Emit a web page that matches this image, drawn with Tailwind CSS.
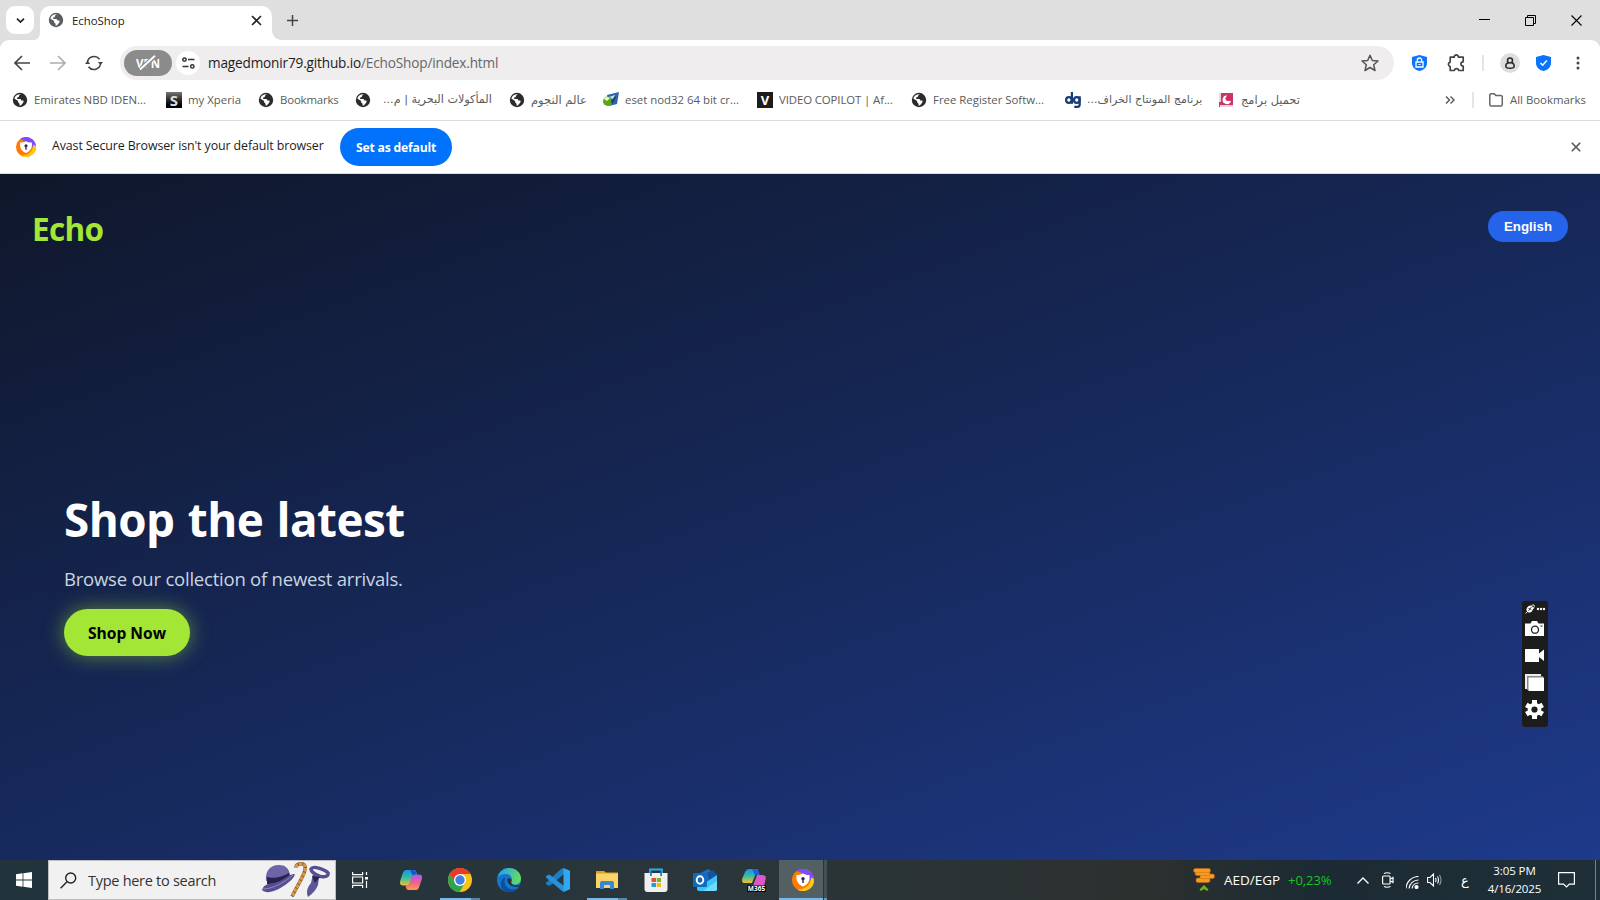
<!DOCTYPE html>
<html lang="en">
<head>
<meta charset="utf-8">
<title>EchoShop</title>
<script src="https://cdn.jsdelivr.net/npm/@tailwindcss/browser@4"></script>
</head>
<body class="w-[1600px] h-[900px] overflow-hidden flex flex-col font-['Open_Sans','Noto_Sans',sans-serif] text-[11.4px] text-[#222] bg-white">
<svg class="hidden">
  <symbol id="globe" viewBox="0 0 16 16"><circle cx="8" cy="8" r="7.200" fill="currentColor"/><path d="M9.200 2.300c-1 .4-2.200 1-2.200 2 0 .8-.7 1-1.400 1.200C4.600 5.800 4.800 7 5.800 7h2.400c.9 0 1 .9 1 1.500h1.300c1 0 1.400.7 1 1.400l-1 1.600c-.7 1.200-1.700 2-2.900 2.200v-1.800c0-.9-1.500-.8-1.500-1.900V9L2.300 6.600A5.900 5.900 0 0 1 9.200 2.300z" fill="#fff"/></symbol>
  <symbol id="avast" viewBox="0 0 24 24"><circle cx="12" cy="12" r="12" fill="#ff7a00"/><path d="M5 2.300A12 12 0 0 1 24 12c0 2-.5 3-1 4.500C20 9 13 5 5 2.300z" fill="#7b4dff"/><path d="M24 11A12 12 0 0 1 6 22.400C14 22 20 19 21 9z" fill="#ffc91a"/><path d="M12 5c2.400 1.300 4.800 1.600 7 1.600 1 6.500-2 10.500-7 12.700-5-2.200-8-6.200-7-12.700 2.200 0 4.600-.3 7-1.600z" fill="#fff"/><circle cx="12" cy="10.500" r="1.900" fill="#2c2f55"/><path d="M11.200 11h1.600v4.200h-1.600z" fill="#2c2f55"/></symbol>
</svg>

<!-- Tab strip -->
<header class="h-10 bg-[#dfdfdf] flex shrink-0">
  <div class="ml-1.5 mt-1.5 size-7 rounded-[9px] bg-white flex items-center justify-center">
    <svg class="size-[9px]" viewBox="0 0 9 9" fill="none" stroke="#222" stroke-width="1.700"><path d="M1 2.600l3.500 3.400L8 2.600"/></svg>
  </div>
  <svg class="w-1.5 h-[34px] mt-1.5" viewBox="0 0 6 34"><path d="M6 26c0 4-2 8-6 8h6z" fill="#fff"/></svg>
  <div class="mt-1.5 w-[232px] h-[34px] rounded-t-[10px] bg-white flex items-center pl-2 pr-2.5 pb-[6px]">
    <svg class="size-4 text-[#5a5e63]"><use href="#globe"/></svg>
    <span class="ml-2 pt-0.5 whitespace-nowrap">EchoShop</span>
    <svg class="ml-auto size-[11px]" viewBox="0 0 11 11" stroke="#222" stroke-width="1.600"><path d="M1 1l9 9M10 1l-9 9"/></svg>
  </div>
  <svg class="w-2.5 h-[34px] mt-1.5" viewBox="0 0 10 34"><path d="M0 24c0 6 4 10 10 10H0z" fill="#fff"/></svg>
  <svg class="ml-[5px] mt-[15px] size-[11px]" viewBox="0 0 11 11" stroke="#444" stroke-width="1.500"><path d="M5.500 0v11M0 5.500h11"/></svg>
  <div class="ml-auto flex items-center mr-[18px] gap-[35px]">
    <svg class="size-[11px]" viewBox="0 0 11 11" stroke="#000"><path d="M0 4.500h11"/></svg>
    <svg class="size-[11px]" viewBox="0 0 11 11" fill="none" stroke="#000"><path d="M.5 2.500h8v8h-8zM2.500 2.500v-2h8v8h-2"/></svg>
    <svg class="size-[11px]" viewBox="0 0 11 11" stroke="#000" stroke-width="1.100"><path d="M.5.500l10 10M10.500.500l-10 10"/></svg>
  </div>
</header>

<!-- Toolbar -->
<div class="bg-[#dfdfdf] shrink-0">
<div class="h-[46px] rounded-t-[9px] bg-white flex items-center">
  <svg class="ml-3.5 size-4" viewBox="0 0 16 16" fill="none" stroke="#444" stroke-width="1.600"><path d="M16 8H1.200M8 1L1 8l7 7"/></svg>
  <svg class="ml-5 size-4" viewBox="0 0 16 16" fill="none" stroke="#adadad" stroke-width="1.600"><path d="M0 8h14.800M8 1l7 7-7 7"/></svg>
  <svg class="ml-[19px] size-[18px]" viewBox="0 0 18 18" fill="none" stroke="#444" stroke-width="1.600"><path d="M2.400 9A6.700 6.700 0 0 1 14.500 5.300M15.600 9A6.700 6.700 0 0 1 3.500 12.700"/><path d="M12.800 8h5.200l-2.500 3zM0 10h5.200L2.500 7z" fill="#444" stroke="none"/></svg>
  <div class="ml-[17px] w-[1274px] h-[34px] rounded-full bg-[#efeded] flex items-center">
    <div class="ml-1 w-12 h-[26px] rounded-full bg-[#8b8b8b] flex items-center justify-center text-white">
      <svg class="w-6 h-4 overflow-visible" viewBox="0 0 24 16"><text x="0" y="12.500" font-size="12" font-weight="700" fill="#fff" textLength="24" lengthAdjust="spacingAndGlyphs">VPN</text><path d="M5 14L19 1" stroke="#8b8b8b" stroke-width="4.500"/><path d="M4 14.500L19 .8" stroke="#fff" stroke-width="1.900"/></svg>
    </div>
    <div class="ml-1 size-6 rounded-full bg-white flex items-center justify-center">
      <svg class="w-[13px] h-3" viewBox="0 0 13 12" fill="none" stroke="#333" stroke-width="1.500"><circle cx="2.500" cy="2.600" r="1.700"/><path d="M6 2.600h6.500M.5 9.400h6"/><circle cx="10.300" cy="9.400" r="1.700"/></svg>
    </div>
    <div class="ml-2 pt-px text-[13.600px] tracking-[-0.160px] whitespace-nowrap text-[#666]"><span class="text-[#1c1c1c]">magedmonir79.github.io</span>/EchoShop/index.html</div>
    <svg class="ml-auto mr-[15px] size-[18px]" viewBox="0 0 18 18" fill="none" stroke="#555" stroke-width="1.500" stroke-linejoin="round"><path d="M9 1.200l2.300 5.300 5.700.5-4.300 3.800 1.300 5.700L9 13.500l-5 3 1.300-5.700L1 7l5.700-.5z"/></svg>
  </div>
  <svg class="ml-[18px] w-[15px] h-4" viewBox="0 0 15 16"><path d="M7.500 0L15 2v6c0 4-3 7-7.500 8C3 15 0 12 0 8V2z" fill="#0a74ff"/><path d="M4 7h7v5H4zM5.300 7V5.200a2.200 2.200 0 0 1 4.400 0V7" fill="none" stroke="#fff" stroke-width="1.300"/><path d="M6.500 9.500h2" stroke="#fff"/></svg>
  <svg class="ml-5 size-[18px]" viewBox="0 0 18 18" fill="none" stroke="#444" stroke-width="1.700" stroke-linejoin="round"><path d="M2.200 3.500h4c-.4-3 4.600-3 4.200 0h4.800v4.600c-3 .2-3 4 0 4.200v4.500h-4.500c-.3-2.600-4-2.600-4.300 0H2.200v-4c-2.400-.6-2.400-3.800 0-4.400z" transform="translate(1 -.3)"/></svg>
  <div class="ml-[17px] w-0.5 h-4 bg-[#e5e5e5]"></div>
  <div class="ml-4 size-5 rounded-full bg-[#dedede] flex items-center justify-center"><svg class="w-[10px] h-3" viewBox="0 0 10 12" fill="none" stroke="#2a2a2a" stroke-width="1.500"><circle cx="5" cy="3.400" r="2.500"/><path d="M3.300 5.500C1.500 6.300.8 7.500.8 9.200.8 10.500 2 11.200 5 11.200s4.200-.7 4.200-2c0-1.700-.7-2.900-2.500-3.700"/></svg></div>
  <svg class="ml-4 w-[15px] h-4" viewBox="0 0 15 16"><path d="M7.500 0L15 2v6c0 4-3 7-7.500 8C3 15 0 12 0 8V2z" fill="#0a74ff"/><path d="M4.400 8l2.300 2.200 4.100-4.600" fill="none" stroke="#fff" stroke-width="1.500"/></svg>
  <svg class="ml-[25px] w-1 h-[14px]" viewBox="0 0 4 14" fill="#444"><circle cx="2" cy="2" r="1.500"/><circle cx="2" cy="7" r="1.500"/><circle cx="2" cy="12" r="1.500"/></svg>
</div>
</div>

<!-- Bookmarks bar -->
<nav class="h-[35px] shrink-0 border-b border-[#dcdcdc] flex items-center pb-[6px] pl-3 text-[#5a5a5a] whitespace-nowrap">
  <div class="w-[154px] flex items-center gap-1.5"><svg class="size-4 text-[#2b2b2b]"><use href="#globe"/></svg><span>Emirates NBD IDEN...</span></div>
  <div class="w-[92px] flex items-center gap-1.5"><div class="size-4 bg-gradient-to-b from-[#777] to-black text-[#ddd] font-bold text-[15px] leading-4 text-center">S</div><span>my Xperia</span></div>
  <div class="w-[97px] flex items-center gap-1.5"><svg class="size-4 text-[#2b2b2b]"><use href="#globe"/></svg><span class="tracking-[-0.150px]">Bookmarks</span></div>
  <div class="w-[154px] flex items-center gap-3"><svg class="size-4 text-[#2b2b2b]"><use href="#globe"/></svg><span dir="rtl" class="pt-px font-['DejaVu_Sans'] text-[11.200px]">المأكولات البحرية | م...</span></div>
  <div class="w-[94px] flex items-center gap-1.5"><svg class="size-4 text-[#2b2b2b]"><use href="#globe"/></svg><span dir="rtl" class="pt-px font-['DejaVu_Sans'] text-[11.500px]">عالم النجوم</span></div>
  <div class="w-[154px] flex items-center gap-1.5"><svg class="size-4" viewBox="0 0 16 16"><path d="M4 3l12-3-2 12-8 2z" fill="#2b66a8"/><path d="M6 5l6-2-1 5z" fill="#bfe0f5"/><circle cx="4.700" cy="9.300" r="4.700" fill="#58a618"/><path d="M1 7c2-3 4-2 6-1l-3 3z" fill="#e8f3e0"/><path d="M8 9l4-5 1 1-4 7z" fill="#143a70"/></svg><span>eset nod32 64 bit cr...</span></div>
  <div class="w-[154px] flex items-center gap-1.5"><div class="size-4 bg-[#1c1c1c] text-white font-bold text-[13px] leading-4 text-center">V</div><span class="tracking-[-0.100px]">VIDEO COPILOT | Af...</span></div>
  <div class="w-[154px] flex items-center gap-1.5"><svg class="size-4 text-[#2b2b2b]"><use href="#globe"/></svg><span>Free Register Softw...</span></div>
  <div class="w-[154px] flex items-center gap-1.5"><svg class="size-4" viewBox="0 0 16 16" fill="none" stroke="#173a78" stroke-width="2.200"><circle cx="3.900" cy="8" r="2.800"/><path d="M6.900 0v11.800M14.700 4.200v8.300q0 2.400-2.500 2.400H9.300"/><circle cx="11.800" cy="8" r="2.800"/></svg><span dir="rtl" class="pt-px font-['DejaVu_Sans'] text-[11px]">برنامج المونتاج الخراف...</span></div>
  <div class="flex items-center gap-2"><svg class="size-[14px]" viewBox="0 0 14 14"><path fill="#c2386c" d="M0 0h14v14H0z"/><path fill="#efd2de" d="M0 0h2v9H0zM1 12h13v2H1z"/><path d="M8 2.500A4.300 4.300 0 1 0 12 8 4 4 0 0 1 8 2.500z" fill="#fff"/><circle cx="9" cy="5.500" r="2.500" fill="#e2255e"/></svg><span dir="rtl" class="pt-px font-['DejaVu_Sans'] text-[11.400px]">تحميل برامج</span></div>
  <svg class="ml-auto w-[10px] h-2" viewBox="0 0 10 8" fill="none" stroke="#555" stroke-width="1.400"><path d="M1 .5L4.500 4 1 7.500M5.500.5L9 4 5.500 7.500"/></svg>
  <div class="ml-[17px] w-0.5 h-4 bg-[#e5e5e5]"></div>
  <svg class="ml-[15px] w-[14px] h-[14px]" viewBox="0 0 14 14" fill="none" stroke="#666" stroke-width="1.500" stroke-linejoin="round"><path d="M.8 2.500q0-1.700 1.500-1.700h3l1.500 1.700h5q1.500 0 1.500 1.500v7.500q0 1.500-1.500 1.500H2.300Q.8 13 .8 11.500z"/></svg>
  <span class="ml-[7px] mr-3.5 w-[76px]">All Bookmarks</span>
</nav>

<!-- Default-browser info bar -->
<div class="h-[53px] shrink-0 border-b border-[#dcdcdc] flex items-center pl-4 pr-[19px] whitespace-nowrap">
  <svg class="size-5"><use href="#avast"/></svg>
  <span class="ml-4 w-[272px] pb-px text-[12.400px] tracking-[-0.100px] text-[#1c1c1c]">Avast Secure Browser isn't your default browser</span>
  <button class="ml-4 w-28 h-[38px] pt-0.5 rounded-full bg-[#0072fb] text-white font-bold text-[12.200px] tracking-[-0.200px]">Set as default</button>
  <svg class="ml-auto size-[10px]" viewBox="0 0 10 10" stroke="#555" stroke-width="1.600"><path d="M.8.800l8.400 8.400M9.200.800L.8 9.200"/></svg>
</div>

<!-- Page -->
<main class="h-[686px] shrink-0 relative bg-[linear-gradient(160deg,#0f172a,#1e3a8a)] flex flex-col">
  <div class="flex justify-between items-start px-8 pt-[37px]">
    <div class="-mt-px h-[39px] text-[#a3e635] font-bold text-[31.500px] tracking-[-0.700px] leading-[38px]">Echo</div>
    <button class="w-20 h-[31px] rounded-full bg-[#2563eb] text-white font-['Liberation_Sans',sans-serif] font-bold text-[13.300px]">English</button>
  </div>
  <section class="mt-[239px] pl-16 flex flex-col items-start">
    <h1 class="text-white font-bold text-[45.800px] tracking-[-0.550px] [word-spacing:2px] leading-[62px] whitespace-nowrap">Shop the latest</h1>
    <p class="mt-4 text-[#cbd5e1] text-[18.500px] tracking-[-0.220px] leading-[26px] whitespace-nowrap">Browse our collection of newest arrivals.</p>
    <button class="mt-[17px] w-[126px] h-[47px] pt-0.5 rounded-full bg-[#a3e635] text-black font-bold text-[15.600px] whitespace-nowrap shadow-[0_0_20px_rgba(163,230,53,0.5)]">Shop Now</button>
  </section>

  <!-- Floating capture widget -->
  <div class="absolute left-[1522px] top-[427px] w-[26px] h-[126px] rounded-[3px] bg-[#1c1c1c]">
    <svg class="w-[26px] h-[126px]" viewBox="0 0 26 126" fill="#fff">
      <ellipse cx="7.800" cy="8" rx="3" ry="3.600" transform="rotate(35 7.800 8)"/><path d="M3.500 12.500L6 10M9 5.500q2-2.500 3-1.500t-1 4" fill="none" stroke="#fff" stroke-width=".9"/><path d="M6.500 7.500l2.800 1M6.500 9.800l3-3.800" stroke="#1c1c1c" stroke-width=".8"/>
      <circle cx="16" cy="8" r="1.200"/><circle cx="19" cy="8" r="1.200"/><circle cx="22" cy="8" r="1.200"/>
      <path d="M3 22.500h5.500L10 20h5l1.500 2.500H22V35H3z"/><circle cx="13" cy="28.700" r="3.500" fill="none" stroke="#1c1c1c" stroke-width="1.300"/><path d="M18.500 25h2" stroke="#1c1c1c"/>
      <path d="M3 48h14v4.500l5-4V60l-5-4v5H3z"/>
      <path d="M3 73h16v2H5v13H3z" fill="#eee"/><path d="M5 75h16v14H5z" fill="#888"/><path d="M6.500 76.500H22V90H6.500z"/>
      <g transform="translate(12.500 108.500)"><circle r="6.800"/><g stroke="#fff" stroke-width="5"><path d="M0-9.500v19M-8.200-4.700l16.400 9.400M-8.200 4.700l16.400-9.400"/></g><circle r="3.100" fill="#1c1c1c"/></g>
    </svg>
  </div>
</main>

<!-- Taskbar -->
<footer class="h-10 shrink-0 bg-[linear-gradient(90deg,#21343b,#2a363b_45%,#2c302f_72%,#1c2b33_82%,#1f2f38)] flex items-center text-white whitespace-nowrap">
  <div class="w-12 flex justify-center"><svg class="size-4" viewBox="0 0 16 16" fill="#fff"><path d="M0 2.200L6.600 1.300v6.200H0zM7.400 1.200L16 0v7.500H7.400zM0 8.400h6.600v6.300L0 13.800zM7.400 8.400H16V16l-8.600-1.200z"/></svg></div>
  <div class="w-72 h-10 bg-[#f1f1f1] border border-[#bdbdbd] flex items-center pl-[11px] text-[#333]">
    <svg class="size-[17px]" viewBox="0 0 17 17" fill="none" stroke="#222" stroke-width="1.400"><circle cx="10.700" cy="6" r="5"/><path d="M7 9.700L.6 16.300"/></svg>
    <span class="ml-[11px] pt-0.5 w-[128px] text-[14.500px] tracking-[-0.280px]">Type here to search</span>
    <svg class="ml-auto mr-[5px] w-[68px] h-9" viewBox="0 0 68 36">
      <path d="M4 19c-1-9 3-16 13-16 6 0 10 3 11 10z" fill="#6c66a8"/><path d="M5 15c7 2 15 0 22-4l1 4c-7 6-16 8-23 7z" fill="#27234b"/><path d="M0 28c2-6 6-6 12-7 9-2 13-8 20-9 3 0-3 8-12 13-8 5-16 7-20 3z" fill="#554f92"/><path d="M1 27c9 0 21-6 30-14" stroke="#8c86c2" fill="none"/>
      <path d="M34 5.500c0-4 8-5.500 9-1 1 4-2 9-4 13l-9 17" fill="none" stroke="#8f5a24" stroke-width="3.500"/><path d="M34 5.500c0-4 8-5.500 9-1 1 4-2 9-4 13l-9 17" fill="none" stroke="#d39a50" stroke-width="3" stroke-dasharray="3.500 1"/>
      <path d="M49 7c2-4 15 1 17 4 1 4-6 5-11 2-4-2-6-4-6-6z" fill="none" stroke="#554f92" stroke-width="3.500"/><path d="M51 12l6 3-1 8c-2 5-5 8-10 12-2-5-1-9 3-14z" fill="#5b559a"/><path d="M50 14l8 1-5 6z" fill="#2a2650"/>
    </svg>
  </div>
  <div class="flex h-10">
    <div class="w-[49px] flex items-center justify-center pr-px"><svg class="size-4" viewBox="0 0 16 16" fill="none" stroke="#fff" stroke-width="1.200"><path d="M.6 0v2.600h10V0M.6 5h10v6H.6zM.6 16v-2.600h10V16M14.500 0v3M14.500 9v7"/><path d="M13 5h3v2.500h-3z" fill="#fff" stroke="none"/></svg></div>
    <div class="w-[50px] flex items-center justify-center pl-px"><svg class="w-[22px] h-5" viewBox="0 0 22 20"><defs><linearGradient id="ca" x1="0" y1="0" x2="0" y2="1"><stop offset="0" stop-color="#1d8ff0"/><stop offset=".5" stop-color="#37bda0"/><stop offset="1" stop-color="#f5c02c"/></linearGradient><linearGradient id="cb" x1="0" y1="0" x2="0" y2="1"><stop offset="0" stop-color="#a75bf0"/><stop offset=".5" stop-color="#ef5f94"/><stop offset="1" stop-color="#ff9a4d"/></linearGradient></defs><path d="M6 0h8c2 0 2.500 2 3 4l-4 1-3 8c-.8 2-2 2.500-4 2.500H3c-3 0-3.500-2-2.700-5L3 2.500Q4 0 6 0z" fill="url(#ca)"/><path d="M12 0c3 0 4 1 5 5h-4c-1 0-1.500-2-2.500-5z" fill="#1558c8"/><path d="M16 20H9c-2.500 0-3-2-3.500-4.500L9 15l3-8c.8-2 2-2.500 4-2.500h3c3 0 3.500 2 2.700 5L19 17.500Q18 20 16 20z" fill="url(#cb)"/></svg></div>
    <div class="w-[49px] relative flex items-center justify-center"><svg class="size-6" viewBox="0 0 24 24"><circle cx="12" cy="12" r="12" fill="#fbc116"/><path d="M1.600 6A12 12 0 0 1 22.400 6H12L7 15z" fill="#e33b2e"/><path d="M1.600 6A12 12 0 0 0 11.500 24L17 15 7 15z" fill="#2da44e"/><circle cx="12" cy="12" r="6" fill="#fff"/><circle cx="12" cy="12" r="4.700" fill="#3f7fe8"/></svg><div class="absolute bottom-0 left-[5px] w-10 h-0.5 bg-gradient-to-r from-[#76b9ed] from-78% to-[#5885a8] to-78%"></div></div>
    <div class="w-[49px] flex items-center justify-center"><svg class="size-6" viewBox="0 0 24 24"><defs><linearGradient id="ed" x1="0" y1="0" x2="1" y2=".3"><stop offset=".2" stop-color="#2aa6e0"/><stop offset="1" stop-color="#62dc62"/></linearGradient></defs><circle cx="12" cy="12" r="12" fill="#1276cf"/><path d="M.5 10C2 3 7 0 12 0c7 0 12 5 12 10.500 0 4-3 6-6.500 6-3 0-4-1.500-3-3C16 10 13.500 6 9 6 5 6 1.500 7.500.5 10z" fill="url(#ed)"/><path d="M8.500 9.500c-3 6 1 12 8 12 2 0 4-1 5-2-2 3-6 4.700-9.500 4.500C6 24 3 19 4 14c.8-3 2.500-4.500 4.500-4.500z" fill="#0c4f9c"/><path d="M10.500 10.500c2-1 4.200.3 4 2.500-1 2 .5 4.600 4.500 4.600 2 0 3.500-.6 5-1.600l-1 2.500C16 20 9.500 17 10.500 10.500z" fill="#21343b"/></svg></div>
    <div class="w-[50px] flex items-center justify-center"><svg class="size-6" viewBox="0 0 24 24"><path d="M18 0v6L3.500 18 0 16.200v-1.400L15 1z" fill="#1c7fc4"/><path d="M18 24v-6L3.500 6.500 0 8v1.400L16 23z" fill="#2493dc"/><path d="M17.500 0L24 2.800v18.400L17.500 24z" fill="#32a6f0"/></svg></div>
    <div class="w-[48px] relative flex items-center justify-center"><svg class="w-[22px] h-[18px]" viewBox="0 0 22 18"><path d="M0 0h8l2 1.500h12v3H0z" fill="#e0a21d"/><path d="M0 2.500h22v14.500H0z" fill="#fbd367"/><path d="M4 18v-6q0-2 2-2h10q2 0 2 2v6h-4v-4H8v4z" fill="#3a87d0"/></svg><div class="absolute bottom-0 left-1 w-10 h-0.5 bg-gradient-to-r from-[#76b9ed] from-78% to-[#5885a8] to-78%"></div></div>
    <div class="w-[49px] flex items-center justify-center"><svg class="size-6" viewBox="0 0 24 24"><path d="M6 7V1.500h12V7" fill="none" stroke="#2cabf0" stroke-width="1.800"/><path d="M.5 5h23v16q0 3-3 3h-17q-3 0-3-3z" fill="#f0f0f0"/><path d="M6 5V3h1.800v5H6zM16.200 5V3H18v5h-1.800z" fill="#1580cf"/><path d="M7.500 10H12v4H7.500z" fill="#e8502a"/><path d="M12.700 10H17v4h-4.300z" fill="#7cb518"/><path d="M7.500 15H12v4H7.500z" fill="#189fe0"/><path d="M12.700 15H17v4h-4.300z" fill="#fbb610"/></svg></div>
    <div class="w-[49px] flex items-center justify-center"><svg class="size-6" viewBox="0 0 24 24"><path d="M4 7l11-6 9 6v10H8z" fill="#1b6ec2"/><path d="M14 5l6-3 4 5-8 5z" fill="#1553a0"/><path d="M4 12l8 3 12-8v14q0 2-2 2H6q-2 0-2-2z" fill="#3fc3f5"/><path d="M10 23l14-10v8q0 2-2 2z" fill="#6edcff"/><rect x="0" y="5" width="14" height="14" rx="1.500" fill="#0f6cbd"/><ellipse cx="7" cy="12" rx="3.300" ry="3.700" fill="none" stroke="#fff" stroke-width="1.900"/></svg></div>
    <div class="w-[50px] flex items-center justify-center"><svg class="size-6" viewBox="0 0 24 24"><path d="M7 1h9l-4 9-2 5H3c-3 0-3.500-2-2.500-5L3 4q1.300-3 4-3z" fill="url(#ca)"/><path d="M13 1c3 0 4 2 5 6h-4c-2 0-2-3-4-6z" fill="#1b62d8"/><path d="M15 7h5q4.500 0 3.700 4L22 18H11z" fill="#dd58c4"/><path d="M5 17.500h19V24H5z" fill="#050505"/><text x="5.700" y="23.200" font-size="6.500" font-weight="700" fill="#fff" textLength="17.500">M365</text></svg></div>
    <div class="w-[44px] border-b-2 border-[#76b9ed] bg-[#536063] flex items-center justify-center pl-1 pt-0.5"><svg class="size-[22px]"><use href="#avast"/></svg></div>
    <div class="ml-px w-[3px] border-b-2 border-[#6296bd] bg-[#435054]"></div>
  </div>
  <div class="ml-auto w-[407px] flex items-center text-[13.500px]">
    <svg class="w-[22px] h-6" viewBox="0 0 22 24"><g fill="#f59a22" stroke="#c96f10" stroke-width=".5"><rect x="3" y="10" width="14" height="4.600" rx="2"/><rect x="7" y="6" width="14.500" height="4.600" rx="2"/><rect x="2" y="3.500" width="15" height="4" rx="2"/><rect x=".5" y=".5" width="17" height="4" rx="2"/></g><path d="M6.500 21.500l4.500-4.500 4.500 4.500-1.500 1.500-3-2-3 2z" fill="#6cb51c"/></svg>
    <span class="ml-[9px] pt-px w-[56px]">AED/EGP</span>
    <span class="ml-2 pt-px w-[43px] text-[#17c423] text-[13px] tracking-[-0.050px]">+0,23%</span>
    <svg class="ml-[26px] w-3 h-[7px]" viewBox="0 0 12 7" fill="none" stroke="#fff" stroke-width="1.300"><path d="M.5 6.500L6 1l5.500 5.500"/></svg>
    <svg class="ml-[13px] w-3 h-4" viewBox="0 0 12 16" fill="none" stroke="#fff" stroke-width="1.200"><rect x=".6" y="4" width="7.500" height="8" rx="1"/><path d="M8.500 7l2.500-1.500v5L8.500 9M2 1.500Q5 0 8.500 1.500M2 14.500Q5 16 8.500 14.500"/></svg>
    <svg class="ml-3 w-[13px] h-[13px] mt-1" viewBox="0 0 13 13" fill="none" stroke="#fff" stroke-width="1.200"><path d="M0 12.500A12.500 12.500 0 0 1 12.500.5M3 12.500A9.500 9.500 0 0 1 12.500 4M6 12.500A6.500 6.500 0 0 1 12.500 7"/><circle cx="10.500" cy="11" r="1.500" fill="#fff"/></svg>
    <svg class="ml-2 w-4 h-[14px]" viewBox="0 0 16 14" fill="none" stroke="#fff" stroke-width="1.100"><path d="M.6 4.500H3L6.500 1v12L3 9.500H.6zM8.500 5q1 2 0 4M10.500 3.500q2 3.500 0 7"/><path d="M12.500 2q3 5 0 10" stroke="#999"/></svg>
    <span class="ml-[18px] w-2 pt-px text-[13px] font-['DejaVu_Sans']">ع</span>
    <div class="ml-[18px] w-[55px] text-[11.500px] leading-[18px] text-center pb-[1px] tracking-[-0.100px]"><div>3:05 PM</div><div>4/16/2025</div></div>
    <svg class="ml-[16px] w-[17px] h-4" viewBox="0 0 17 16" fill="none" stroke="#fff" stroke-width="1.200"><path d="M.6.600h15.800v11.500h-5L8.500 15l-2.900-2.900h-5z"/></svg>
    <div class="ml-auto mr-1 w-px h-10 bg-[#77838a]"></div>
  </div>
</footer>
</body>
</html>
